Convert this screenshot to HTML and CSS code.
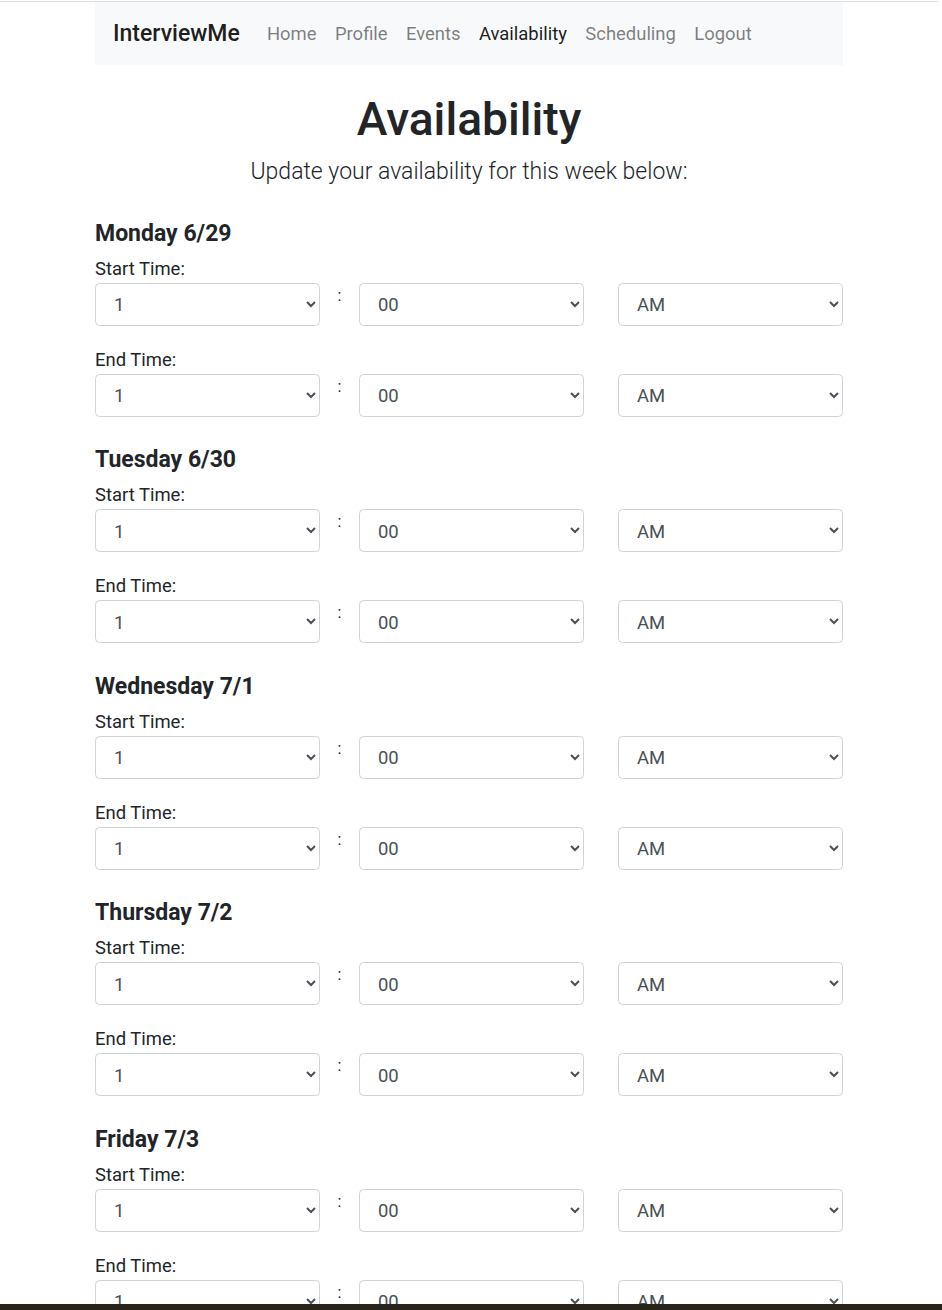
FILE: index.html
```html
<!DOCTYPE html>
<html lang="en">
<head>
<meta charset="utf-8">
<title>InterviewMe - Availability</title>
<link rel="stylesheet" href="styles.css">
</head>
<body>
<div class="topline"></div>
<div class="container">
  <nav class="navbar">
    <a class="brand" href="#">InterviewMe</a>
    <ul class="nav">
      <li><a class="nav-link" href="#">Home</a></li>
      <li><a class="nav-link" href="#">Profile</a></li>
      <li><a class="nav-link" href="#">Events</a></li>
      <li><a class="nav-link active" href="#">Availability</a></li>
      <li><a class="nav-link" href="#">Scheduling</a></li>
      <li><a class="nav-link" href="#">Logout</a></li>
    </ul>
  </nav>

  <h1 class="title">Availability</h1>
  <p class="lead">Update your availability for this week below:</p>

  <form class="week">
    <section class="day">
      <h5 class="day-title">Monday 6/29</h5>
      <div class="group">
        <label class="label">Start Time:</label>
        <div class="time-row">
          <select class="sel"><option>1</option><option>2</option></select>
          <span class="colon">:</span>
          <select class="sel"><option>00</option><option>30</option></select>
          <span class="spacer"></span>
          <select class="sel"><option>AM</option><option>PM</option></select>
        </div>
      </div>
      <div class="group">
        <label class="label">End Time:</label>
        <div class="time-row">
          <select class="sel"><option>1</option><option>2</option></select>
          <span class="colon">:</span>
          <select class="sel"><option>00</option><option>30</option></select>
          <span class="spacer"></span>
          <select class="sel"><option>AM</option><option>PM</option></select>
        </div>
      </div>
    </section>

    <section class="day">
      <h5 class="day-title">Tuesday 6/30</h5>
      <div class="group">
        <label class="label">Start Time:</label>
        <div class="time-row">
          <select class="sel"><option>1</option><option>2</option></select>
          <span class="colon">:</span>
          <select class="sel"><option>00</option><option>30</option></select>
          <span class="spacer"></span>
          <select class="sel"><option>AM</option><option>PM</option></select>
        </div>
      </div>
      <div class="group">
        <label class="label">End Time:</label>
        <div class="time-row">
          <select class="sel"><option>1</option><option>2</option></select>
          <span class="colon">:</span>
          <select class="sel"><option>00</option><option>30</option></select>
          <span class="spacer"></span>
          <select class="sel"><option>AM</option><option>PM</option></select>
        </div>
      </div>
    </section>

    <section class="day">
      <h5 class="day-title">Wednesday 7/1</h5>
      <div class="group">
        <label class="label">Start Time:</label>
        <div class="time-row">
          <select class="sel"><option>1</option><option>2</option></select>
          <span class="colon">:</span>
          <select class="sel"><option>00</option><option>30</option></select>
          <span class="spacer"></span>
          <select class="sel"><option>AM</option><option>PM</option></select>
        </div>
      </div>
      <div class="group">
        <label class="label">End Time:</label>
        <div class="time-row">
          <select class="sel"><option>1</option><option>2</option></select>
          <span class="colon">:</span>
          <select class="sel"><option>00</option><option>30</option></select>
          <span class="spacer"></span>
          <select class="sel"><option>AM</option><option>PM</option></select>
        </div>
      </div>
    </section>

    <section class="day">
      <h5 class="day-title">Thursday 7/2</h5>
      <div class="group">
        <label class="label">Start Time:</label>
        <div class="time-row">
          <select class="sel"><option>1</option><option>2</option></select>
          <span class="colon">:</span>
          <select class="sel"><option>00</option><option>30</option></select>
          <span class="spacer"></span>
          <select class="sel"><option>AM</option><option>PM</option></select>
        </div>
      </div>
      <div class="group">
        <label class="label">End Time:</label>
        <div class="time-row">
          <select class="sel"><option>1</option><option>2</option></select>
          <span class="colon">:</span>
          <select class="sel"><option>00</option><option>30</option></select>
          <span class="spacer"></span>
          <select class="sel"><option>AM</option><option>PM</option></select>
        </div>
      </div>
    </section>

    <section class="day">
      <h5 class="day-title">Friday 7/3</h5>
      <div class="group">
        <label class="label">Start Time:</label>
        <div class="time-row">
          <select class="sel"><option>1</option><option>2</option></select>
          <span class="colon">:</span>
          <select class="sel"><option>00</option><option>30</option></select>
          <span class="spacer"></span>
          <select class="sel"><option>AM</option><option>PM</option></select>
        </div>
      </div>
      <div class="group">
        <label class="label">End Time:</label>
        <div class="time-row">
          <select class="sel"><option>1</option><option>2</option></select>
          <span class="colon">:</span>
          <select class="sel"><option>00</option><option>30</option></select>
          <span class="spacer"></span>
          <select class="sel"><option>AM</option><option>PM</option></select>
        </div>
      </div>
    </section>
  </form>
</div>
<div class="bottom-bar"></div>
</body>
</html>
```
FILE: styles.css
```css
html {
  font-size: 18px;
  overflow: hidden;
}
body {
  margin: 0;
  padding: 1px 4px 0 0;
  font-family: Roboto, "Noto Sans", "Liberation Sans", sans-serif;
  font-size: 18.45px;
  line-height: 27px;
  color: #212529;
  background: #fff;
}
.topline {
  height: 1px;
  background: #dfdfdf;
}
.container {
  width: 748px;
  margin: 0 auto;
}
.navbar {
  display: flex;
  align-items: center;
  background: #f8f9fa;
  padding: 9px 18px;
  height: 63px;
  box-sizing: border-box;
}
.brand {
  font-size: 23px;
  line-height: 33.75px;
  padding: 5.625px 0;
  margin-right: 18px;
  font-weight: 500;
  color: rgba(0, 0, 0, 0.9);
  text-decoration: none;
  white-space: nowrap;
}
.nav {
  display: flex;
  list-style: none;
  margin: 0;
  padding: 0;
}
.nav-link {
  display: block;
  padding: 10px 9.2px 8px;
  color: rgba(0, 0, 0, 0.5);
  text-decoration: none;
}
.nav-link.active {
  color: rgba(0, 0, 0, 0.9);
}
.title {
  margin: 27px 0 9px;
  font-size: 46.2px;
  line-height: 54px;
  font-weight: 500;
  text-align: center;
}
.lead {
  margin: 0 0 31px;
  font-size: 23px;
  line-height: 33.75px;
  font-weight: 300;
  text-align: center;
}
.day {
  padding-bottom: 8.5px;
}
.day-title {
  margin: 0 0 9px;
  font-size: 23px;
  line-height: 27px;
  font-weight: 700;
}
.group {
  margin-bottom: 21px;
}
.label {
  display: block;
  line-height: 27px;
}
.time-row {
  display: grid;
  grid-template-columns: 225px 39px 225px 34px 225px;
  align-items: start;
}
.colon {
  padding-top: 2px;
  text-align: center;
  font-size: 16px;
  line-height: 22px;
  color: #212529;
}
.sel {
  box-sizing: border-box;
  width: 100%;
  height: 43px;
  margin: 0;
  padding: 7.5px 9px 6px 14px;
  font-family: inherit;
  font-size: 18.45px;
  line-height: 27px;
  color: #495057;
  background-color: #fff;
  border: 1px solid #ced4da;
  border-radius: 4.5px;
}
.bottom-bar {
  position: fixed;
  left: 0;
  right: 0;
  bottom: 0;
  height: 6px;
  background: #29241a;
}
```
